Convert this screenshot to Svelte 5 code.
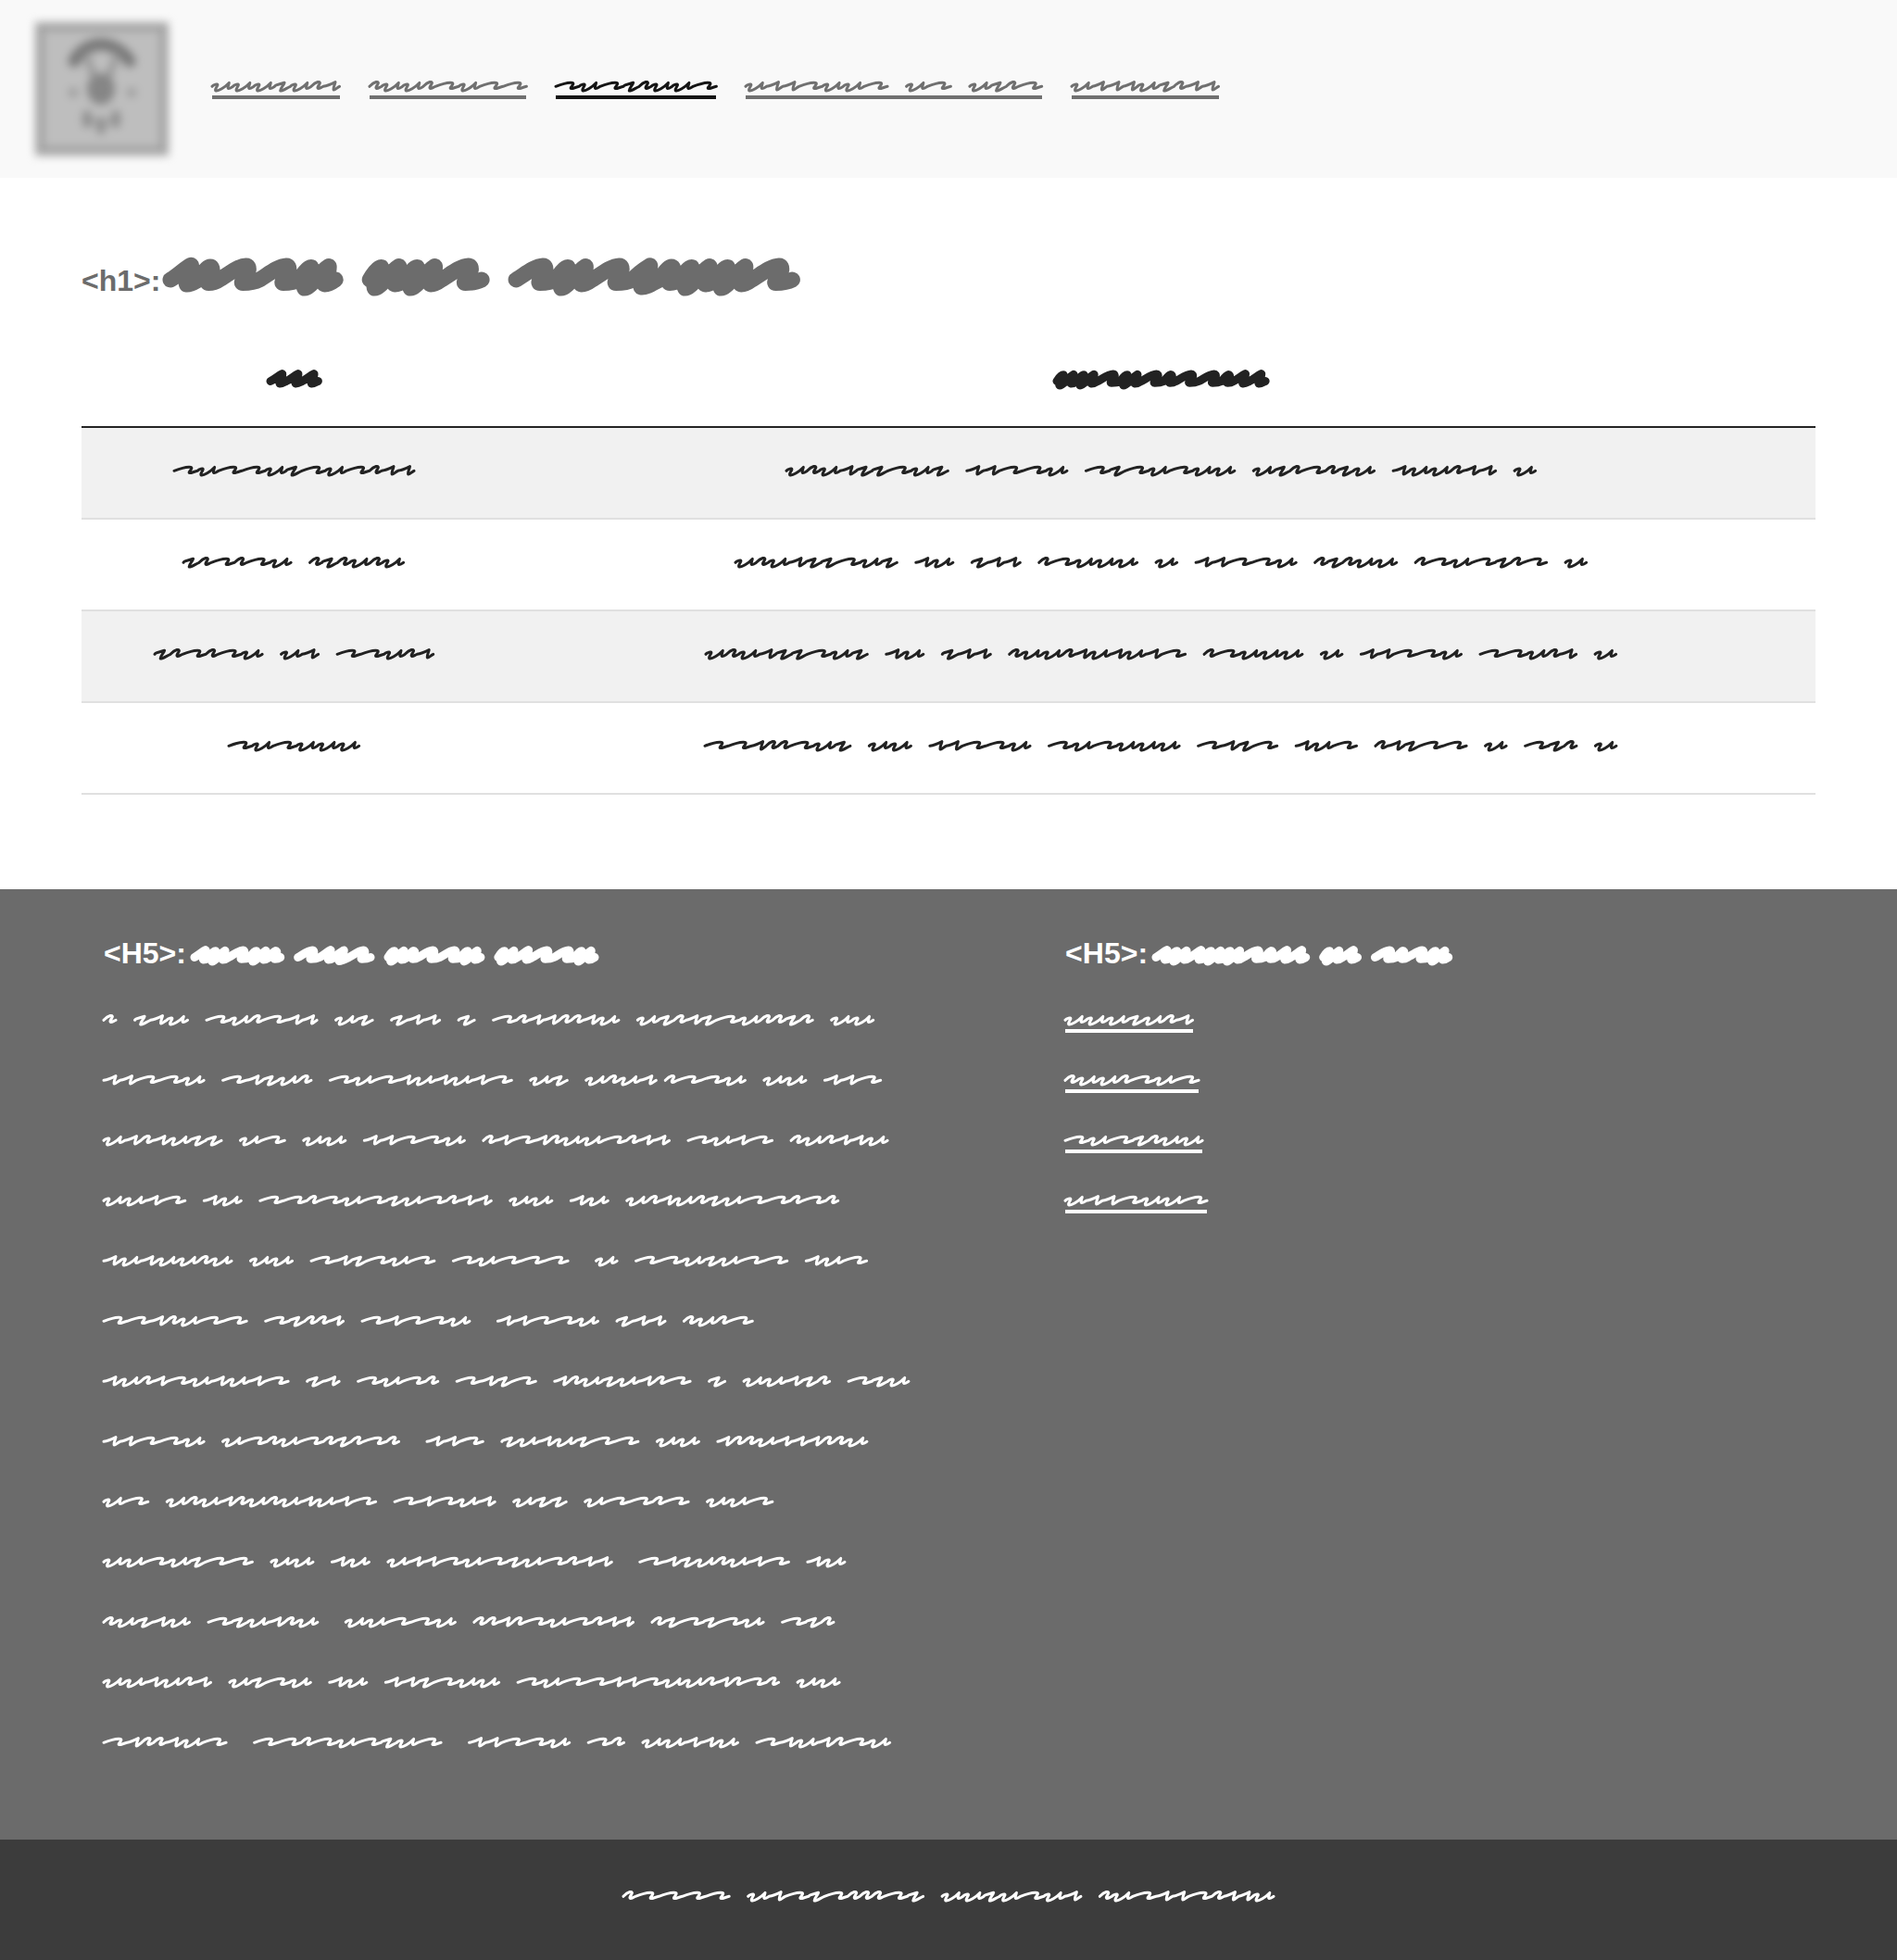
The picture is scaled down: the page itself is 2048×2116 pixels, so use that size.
<script>
  // Each stroke is a chain of cubic curves, six numbers per curve, beginning at (0, start).
  const thin = {
    start: 4.3,
    u: [1.5, 2.4, 6.5, 0.8, 5.8, 3, 5.2, 5, 2.6, 7.8, 3.8, 8.9, 6.5, 10, 14, 5, 18.3, 0.4, 18, 3, 16.2, 5.4, 17.4, 6.4, 18.6, 7, 20.5, 5.6, 22.5, 4.3],
    t: [5, 2.4, 11, 0.4, 16, 0.2, 19, 0.1, 19.3, 1, 18.4, 2.6, 17.6, 4, 15, 6.4, 16.8, 6.6, 19, 6.6, 22, 5, 25.3, 4.3],
    r: [2, 2.2, 4.5, 0.2, 7, -0.5, 9.6, -1, 9.8, 0.6, 8.8, 2, 7.8, 3.6, 6, 6, 7.6, 6.5, 9.4, 6.6, 11, 5, 13, 4.3],
    s: [4.5, 3.6, 9, 1.6, 13, -0.4, 12.6, 2.2, 10.4, 6, 11.2, 8, 12.6, 8.4, 15, 5.4, 17.5, 4.3],
    i: [4, 3.6, 8, 1.6, 12, -0.4, 11.6, 2.2, 9.2, 6, 10, 8, 11.4, 8.4, 13.2, 5.4, 15.5, 4.3],
    q: [0.5, 2.2, 5, 2.4, 10.6, 0.2, 10, 3, 5.8, 6.4, 6.2, 9, 8, 9.6, 13, 6, 17, 4.3],
  };

  const thick = {
    start: 6,
    u: [1.5, 4, 5, 0.6, 7.2, 0.6, 8, 2.5, 1.5, 8, 3, 9.6, 7, 9.6, 12, 3, 18.4, 0.2, 19, 3, 14.5, 7.6, 15.8, 8, 18, 8, 20.5, 7, 22.5, 6],
    t: [4, 4.6, 11, 0.2, 17, 0, 19.6, 0, 18.4, 3, 17, 4.4, 15.6, 6, 13.4, 7.4, 15, 7.4, 18, 7.4, 22, 7.2, 25.3, 6],
    r: [2, 4, 4.5, 1, 7.4, 0.4, 9.4, 0.4, 8.8, 3, 7.8, 4.4, 6.6, 6, 4.8, 7.4, 6.4, 7.4, 9, 7.4, 11, 7, 13, 6],
    s: [4.5, 4.4, 9, 1, 13, -0.3, 13.6, 2.2, 9, 6, 10.2, 8, 12.6, 8.2, 15, 7, 17.5, 6],
    q: [2, 4.4, 6, 2, 11, -0.1, 11.6, 3, 4, 7.4, 5.4, 9.2, 8, 9.6, 13, 7.4, 17, 6],
  };

  const kinds = {
    body: { glyphs: thin, sx: 1, sy: 1, pen: 3, space: 20.5, top: 4, height: 18, pad: 0 },
    table: { glyphs: thick, sx: 0.98, sy: 1.25, pen: 9, space: 19, top: 6, height: 27, pad: 5 },
    small: { glyphs: thick, sx: 0.92, sy: 1.25, pen: 9, space: 19, top: 6, height: 27, pad: 5 },
    large: { glyphs: thick, sx: 1.72, sy: 2.5, pen: 17, space: 37, top: 12, height: 46, pad: 9 },
  };

  function scribble(text, kind) {
    const k = kinds[kind];
    let x = k.pad;
    let d = '';
    let fresh = true;
    for (const ch of text) {
      if (ch === ' ' || ch === '.') {
        x += ch === '.' ? 10 : k.space;
        fresh = true;
        continue;
      }
      const c = k.glyphs[ch];
      if (fresh) d += `M${x.toFixed(1)} ${(k.glyphs.start * k.sy).toFixed(1)}`;
      fresh = false;
      for (let n = 0; n < c.length; n += 2) {
        d += n % 6 === 0 ? 'C' : ' ';
        d += `${(x + c[n] * k.sx).toFixed(1)} ${(c[n + 1] * k.sy).toFixed(1)}`;
      }
      x += c[c.length - 2] * k.sx;
    }
    return { d, width: Math.round(x + k.pad), height: k.height, top: k.top, pen: k.pen };
  }

  const nav = [
    { text: 'uuuqurs' },
    { text: 'ruurtutt' },
    { text: 'tutqruut', current: true },
    { text: 'usstuut ut uqrt' },
    { text: 'uisiuqrss' },
  ];

  const rows = [
    ['tuttuqtutrss', 'urusqqtuq ssttu tqtutuu uqrtrqu suurss u'],
    ['qrtrtu rqruru', 'urusqqtuq su qss rtuuu u ssttu rqruu rtutqrt u'],
    ['qrtrtu us tturs', 'urusqqtuq su qss ruuriuiust rtuuu u ssttu tturs u'],
    ['tutuuu', 'ttirrtuq uu ssttu tutuuu tsqt sut rsqtt u tqr u'],
  ];

  const lines = [
    'r qsu turtsi uq qss q trisrriu uqriqturrqr uu',
    'ssttu tsqur tutsusust uq urus.rttu uu sst',
    'usrsuqq ut uu ssttu rstiruutris tust rurisu',
    'uust su ttrtutqutrss uu su uriurquttrtr',
    'susuuru uu tsqtut tuttt. u ttuqutt sut',
    'ttsrutt tqrri tsttu. ssttu qss rurt',
    'suritusust qs tutr tsqt iruqusrt q uusqr tqu',
    'ssttu utrutrqrtr. sst qusuqtt uu irruisirru',
    'ut uruiruruiust tstus uqq uttrt uut',
    'uutuqtt uu su uistutqutrss. tsqurust su',
    'ruqsu tqusru. uuttu rrirtutrii rqtqtu tqr',
    'uusurs uqtu su ssqtuu tuttistuurirtr uu',
    'tirrsut. ttrtutqut. ssttu tr uussu tsusrtu',
  ];

  const footerLinks = ['uuuqurs', 'ruurtut', 'tutqruu', 'usstuut'];
</script>

{#snippet ink(text, kind)}
  {@const s = scribble(text, kind)}
  <svg class="ink" width={s.width} height={s.height} viewBox="0 {-s.top} {s.width} {s.height}" aria-hidden="true">
    <path d={s.d} stroke-width={s.pen} />
  </svg>
{/snippet}

<header class="top">
  <a class="logo" href="#home" aria-label="Home">
    <svg width="144" height="144" viewBox="0 0 144 144" aria-hidden="true">
      <rect width="144" height="144" fill="#a4a4a4" />
      <rect x="10" y="10" width="124" height="124" fill="#bebebe" />
      <g fill="none" stroke="#787878" stroke-linecap="round">
        <path d="M42 42C48 31 59 24 71 24S95 31 102 42" stroke-width="13" />
        <path d="M55 36L65 62M88 36L78 62" stroke-width="7" stroke="#979797" />
        <path d="M56 100V109M71 107V116M87 100V109" stroke-width="9" stroke="#878787" />
        <path d="M58 104L71 112L86 104" stroke-width="4" stroke="#999" />
      </g>
      <ellipse cx="71" cy="72" rx="15" ry="17" fill="#868686" />
      <circle cx="41" cy="76" r="5" fill="#999" />
      <circle cx="104" cy="76" r="5" fill="#999" />
    </svg>
  </a>
  <nav aria-label="Main">
    {#each nav as item, n}
      <a
        class="link"
        class:current={item.current}
        href="#page-{n + 1}"
        aria-current={item.current ? 'page' : undefined}
        aria-label="Page {n + 1}"
      >
        {@render ink(item.text, 'body')}
      </a>
    {/each}
  </nav>
</header>

<main>
  <h1><span>&lt;h1&gt;:</span>{@render ink('srttu uut tutqruut', 'large')}</h1>
  <table>
    <thead>
      <tr>
        <th scope="col">{@render ink('sss', 'table')}</th>
        <th scope="col">{@render ink('uututrttrss', 'table')}</th>
      </tr>
    </thead>
    <tbody>
      {#each rows as row}
        <tr>
          {#each row as cell}
            <td>{@render ink(cell, 'body')}</td>
          {/each}
        </tr>
      {/each}
    </tbody>
  </table>
</main>

<footer>
  <div class="columns">
    <section>
      <h5><span>&lt;H5&gt;:</span>{@render ink('sutur tsqt urttu usttu', 'small')}</h5>
      <div class="lines">
        {#each lines as line}
          {@render ink(line, 'body')}
        {/each}
      </div>
    </section>
    <section>
      <h5><span>&lt;H5&gt;:</span>{@render ink('susuutrss us trtu', 'small')}</h5>
      <ul>
        {#each footerLinks as text, n}
          <li>
            <a class="link" href="#page-{n + 1}" aria-label="Page {n + 1}">{@render ink(text, 'body')}</a>
          </li>
        {/each}
      </ul>
    </section>
  </div>
  <div class="bar">{@render ink('rtttt ustqtrrrtq uuqutus rutsstriiu', 'body')}</div>
</footer>

<style>
  :global(body) {
    margin: 0;
    background: #fff;
    color: #222;
    font-family: 'Liberation Sans', Arial, sans-serif;
  }

  .ink {
    display: block;
    flex: none;
    overflow: visible;
    fill: none;
    stroke: currentColor;
    stroke-linecap: round;
    stroke-linejoin: round;
  }

  .top {
    display: flex;
    align-items: center;
    gap: 47px;
    padding: 24px 38px;
    background: #f9f9f9;
  }

  .logo {
    flex: none;
    filter: blur(5px);
  }

  .logo svg {
    display: block;
  }

  nav {
    display: flex;
    flex-wrap: wrap;
    gap: 32px;
    color: #707070;
  }

  .link {
    display: block;
    width: fit-content;
    border-bottom: 4px solid;
    color: inherit;
    text-decoration: none;
  }

  .current {
    color: #151515;
  }

  main {
    padding: 83px 88px 102px;
  }

  h1,
  h5 {
    display: flex;
    align-items: flex-end;
    margin: 0;
    font-size: 32px;
    line-height: 36px;
    font-weight: 700;
  }

  h1 {
    gap: 2px;
    margin-bottom: 77px;
    color: #6c6c6c;
  }

  h5 {
    gap: 4px;
    margin-bottom: 46px;
  }

  table {
    width: 100%;
    border-collapse: separate;
    border-spacing: 0;
    table-layout: fixed;
  }

  th,
  td {
    border-bottom: 2px solid #e0e0e0;
  }

  th {
    padding: 0 0 35px;
    border-color: #242424;
  }

  td {
    padding: 38px 0 41px;
  }

  th:first-child {
    width: 458px;
  }

  th .ink,
  td .ink {
    margin: 0 auto;
  }

  tbody tr:nth-child(odd) {
    background: #f1f1f1;
  }

  footer {
    background: #6b6b6b;
    color: #fff;
  }

  .columns {
    display: grid;
    grid-template-columns: 61fr 49fr;
    padding: 51px 88px 95px;
  }

  section {
    padding: 0 24px;
  }

  .lines {
    display: flex;
    flex-direction: column;
    gap: 47px;
  }

  ul {
    display: flex;
    flex-direction: column;
    gap: 43px;
    margin: 0;
    padding: 0;
    list-style: none;
  }

  .bar {
    display: flex;
    justify-content: center;
    padding: 53px 24px 59px;
    background: #3c3c3c;
  }
</style>
